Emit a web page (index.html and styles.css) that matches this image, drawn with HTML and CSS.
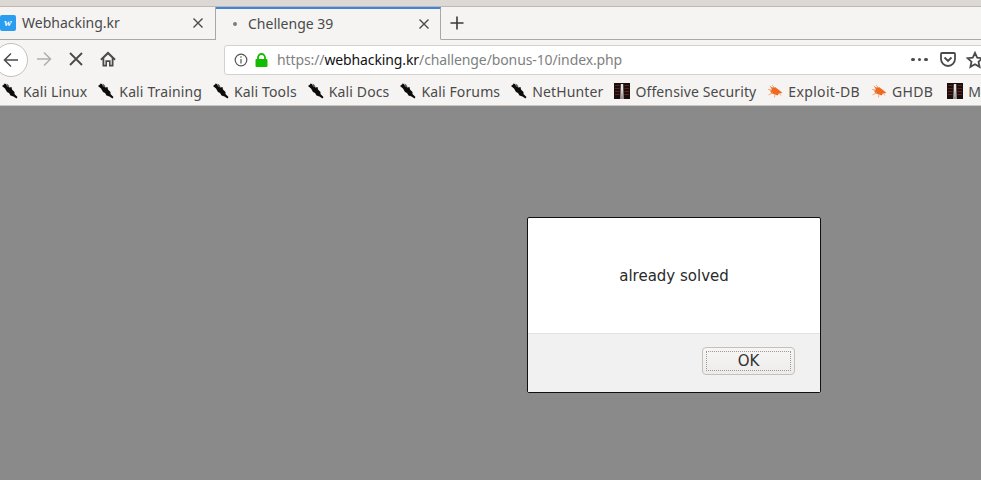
FILE: index.html
```html
<!DOCTYPE html>
<html lang="en">
<head>
<meta charset="utf-8">
<title>Challenge 39</title>
<link rel="stylesheet" href="styles.css">
</head>
<body>
<svg class="defs" width="0" height="0" aria-hidden="true">
  <defs>
    <symbol id="kali" viewBox="0 0 16 16">
      <path d="M0 3 L2 1.5 L2.5 0.5 L4 1 L5 3 L7.5 4.5 L9.5 4 L10 6.5 L12.5 9 L12.5 11 L15.5 14 L14.5 15.5 L11.5 13.5 L8.5 12.5 L7 10 L5 9 L3 5.5 Z" fill="#0c0c0c"/>
      <path d="M4.5 0.5 L6.5 2 L7.5 4 L6.5 4 L5 2.5 Z" fill="#555"/>
    </symbol>
    <symbol id="offsec" viewBox="0 0 16 16">
      <rect width="16" height="16" fill="#1d0e0e"/>
      <path d="M1 2.5H5.5M1 5.5H5.5M1 8.5H5.5M1 11.5H5.5M10.5 2.5H15M10.5 5.5H15M10.5 8.5H15M10.5 11.5H15" stroke="#5c2521" stroke-width="1"/>
      <path d="M6.8 1 H9.2 L9.6 16 H8.4 L8 5.5 L7.6 16 H6.4 Z" fill="#e8e4e0"/>
    </symbol>
    <symbol id="bug" viewBox="0 0 16 16">
      <path d="M2.5 2.5 L5 4.5 L8 4 L12 7 L15.5 10 L12 10.5 L10.5 12.5 L8 11.5 L4.5 10.5 L3 7.5 L5 6.5 Z" fill="#ee6a22"/>
      <path d="M5 2 L8 5 M1 6.5 L5 7 M1.5 12 L6 9.5 M8 11 L7.5 14.5 M12 10 L14 12.5" stroke="#f7a678" stroke-width="1" fill="none"/>
    </symbol>
  </defs>
</svg>

<div class="strip"></div>

<div class="tabbar">
  <div class="tab tab-first">
    <span class="favicon">w</span>
    <span class="tab-title">Webhacking.kr</span>
    <svg class="tab-close" viewBox="0 0 12 12"><path d="M1.5 1.5L10.5 10.5M10.5 1.5L1.5 10.5"/></svg>
  </div>
  <div class="tab tab-active">
    <span class="tab-dot"></span>
    <span class="tab-title">Chellenge 39</span>
    <svg class="tab-close" viewBox="0 0 12 12"><path d="M1.5 1.5L10.5 10.5M10.5 1.5L1.5 10.5"/></svg>
  </div>
  <svg class="newtab" viewBox="0 0 16 16"><path d="M8 1.5V14.5M1.5 8H14.5"/></svg>
</div>

<div class="navbar">
  <div class="back">
    <svg class="nav-icon" viewBox="0 0 18 18"><path d="M16 9H2.5M9 2.5L2.5 9L9 15.5"/></svg>
  </div>
  <svg class="nav-icon forward" viewBox="0 0 18 18"><path d="M2 9H15.5M9 2.5L15.5 9L9 15.5"/></svg>
  <svg class="nav-icon stop" viewBox="0 0 16 16"><path d="M2 2L14 14M14 2L2 14"/></svg>
  <svg class="home" viewBox="0 0 16 16"><path d="M8 0.5L0.3 8L1.6 9.4L2.5 8.6V15.5H7V11H9V15.5H13.5V8.6L14.4 9.4L15.7 8Z M8 3.4L11.7 7V13.7H10.6V9.3H5.4V13.7H4.3V7Z" fill-rule="evenodd"/></svg>
  <div class="urlbar">
    <svg class="info" viewBox="0 0 14 14"><circle cx="7" cy="7" r="5.8"/><path d="M7 6V10.5M7 3.2V4.8"/></svg>
    <svg class="lock" viewBox="0 0 13 14"><path d="M3 6.5V4.5a3.5 3.5 0 0 1 7 0V6.5" fill="none" stroke="#12bc00" stroke-width="1.8"/><rect x="0.5" y="6" width="12" height="8" rx="1" fill="#12bc00"/></svg>
    <span class="url"><span class="url-dim">https://</span>webhacking.kr<span class="url-dim">/challenge/bonus-10/index.php</span></span>
    <span class="dots"><i></i><i></i><i></i></span>
    <svg class="pocket" viewBox="0 0 16 15"><path d="M2 1H14A1 1 0 0 1 15 2V7A7 7 0 0 1 1 7V2A1 1 0 0 1 2 1Z M4.5 5.5L8 9L11.5 5.5"/></svg>
    <svg class="star" viewBox="0 0 18 18"><path d="M9 1.8L11.2 6.6L16.4 7.2L12.5 10.7L13.6 15.9L9 13.3L4.4 15.9L5.5 10.7L1.6 7.2L6.8 6.6Z"/></svg>
  </div>
</div>

<div class="bookmarks">
  <span class="bm"><svg class="bm-icon"><use href="#kali"/></svg>Kali Linux</span>
  <span class="bm"><svg class="bm-icon"><use href="#kali"/></svg>Kali Training</span>
  <span class="bm"><svg class="bm-icon"><use href="#kali"/></svg>Kali Tools</span>
  <span class="bm"><svg class="bm-icon"><use href="#kali"/></svg>Kali Docs</span>
  <span class="bm"><svg class="bm-icon"><use href="#kali"/></svg>Kali Forums</span>
  <span class="bm"><svg class="bm-icon"><use href="#kali"/></svg>NetHunter</span>
  <span class="bm"><svg class="bm-icon"><use href="#offsec"/></svg>Offensive Security</span>
  <span class="bm bm-wide"><svg class="bm-icon"><use href="#bug"/></svg>Exploit-DB</span>
  <span class="bm bm-wide"><svg class="bm-icon"><use href="#bug"/></svg>GHDB</span>
  <span class="bm bm-last"><svg class="bm-icon"><use href="#offsec"/></svg>M</span>
</div>

<main class="content">
  <div class="dialog">
    <div class="dialog-body">already solved</div>
    <div class="dialog-foot">
      <button class="ok" type="button"><span class="ok-inner">OK</span></button>
    </div>
  </div>
</main>
</body>
</html>
```
FILE: styles.css
```css
* { box-sizing: border-box; }
html, body { margin: 0; padding: 0; height: 100%; overflow: hidden; }
body {
  width: 981px;
  height: 480px;
  display: flex;
  flex-direction: column;
  font-family: "Noto Sans", "Open Sans", sans-serif;
  color: #3a3a3a;
  background: #8a8a8a;
  position: relative;
}
.defs { position: absolute; }

.strip {
  height: 7px;
  flex: none;
  background: #dcd8d3;
  border-bottom: 1px solid #bfb8b1;
}

.tabbar {
  height: 33px;
  flex: none;
  display: flex;
  align-items: stretch;
  background: #f5f4f2;
  border-bottom: 1px solid #aaa7a4;
}
.tab {
  display: flex;
  align-items: center;
  font-size: 14px;
  position: relative;
}
.tab-first {
  width: 216px;
  border-right: 1px solid #aaa7a4;
}
.favicon {
  width: 16px;
  height: 16px;
  flex: none;
  border-radius: 2px;
  background: #2a9df0;
  color: #fff;
  font: italic bold 11px/15px "Liberation Serif", serif;
  text-align: center;
}
.tab-first .tab-title { margin-left: 6px; width: 170px; }
.tab-title { color: #4a4a4a; white-space: nowrap; line-height: 20px; }
.tab-close {
  width: 12px;
  height: 12px;
  flex: none;
  fill: none;
  stroke: #4a4a4a;
  stroke-width: 1.4;
}
.tab-active {
  width: 225px;
  height: 33px;
  padding-left: 17px;
  background: #f5f4f2;
  border-top: 2px solid #3d85dc;
  border-right: 1px solid #aaa7a4;
  border-bottom: 1px solid #f5f4f2;
}
.tab-dot {
  width: 4px;
  height: 4px;
  flex: none;
  border-radius: 50%;
  background: #7d7d7d;
}
.tab-active .tab-title { margin-left: 11px; width: 170px; }
.newtab {
  width: 16px;
  height: 16px;
  margin: 8px 0 0 8px;
  fill: none;
  stroke: #3a3a3a;
  stroke-width: 1.6;
}

.navbar {
  height: 38px;
  flex: none;
  display: flex;
  align-items: center;
  background: #f5f4f2;
}
.back {
  width: 34px;
  height: 34px;
  flex: none;
  margin-left: -6px;
  margin-top: 1px;
  border-radius: 50%;
  background: #fff;
  border: 1px solid #c3c0bd;
  display: flex;
  align-items: center;
  justify-content: center;
}
.nav-icon {
  width: 18px;
  height: 18px;
  flex: none;
  fill: none;
  stroke: #4a4a4a;
  stroke-width: 1.5;
}
.forward { margin-left: 7px; stroke: #b0afad; }
.stop { width: 16px; height: 16px; margin-left: 15px; stroke-width: 1.8; }
.home { width: 16px; height: 16px; flex: none; margin-left: 16px; fill: #4a4a4a; }

.urlbar {
  width: 800px;
  height: 30px;
  flex: none;
  margin-left: 108px;
  margin-top: 1px;
  display: flex;
  align-items: center;
  background: #fff;
  border: 1px solid #d4d2cf;
  border-radius: 3px 0 0 3px;
  padding-left: 9px;
}
.info {
  width: 14px;
  height: 14px;
  flex: none;
  fill: none;
  stroke: #555;
  stroke-width: 1.2;
}
.lock { width: 13px; height: 14px; flex: none; margin-left: 7px; }
.url {
  margin-left: 9px;
  width: 634px;
  flex: none;
  font-size: 14px;
  letter-spacing: -0.11px;
  color: #111;
  white-space: nowrap;
}
.url-dim { color: #7f7f7f; }
.dots { display: flex; gap: 3px; flex: none; }
.dots i { width: 3.5px; height: 3.5px; border-radius: 50%; background: #4a4a4a; display: block; }
.pocket {
  width: 16px;
  height: 15px;
  flex: none;
  margin-left: 12px;
  fill: none;
  stroke: #4a4a4a;
  stroke-width: 1.8;
}
.star {
  width: 18px;
  height: 18px;
  flex: none;
  margin-left: 10px;
  fill: none;
  stroke: #4a4a4a;
  stroke-width: 1.8;
}

.bookmarks {
  height: 28px;
  flex: none;
  display: flex;
  align-items: center;
  gap: 11px;
  padding-left: 2px;
  padding-bottom: 1px;
  background: #f5f4f2;
  border-bottom: 1px solid #c9c6c3;
  overflow: hidden;
  white-space: nowrap;
  font-size: 14px;
  letter-spacing: 0.13px;
  color: #4a4a4a;
}
.bm { display: flex; align-items: center; flex: none; }
.bm-wide { letter-spacing: 0.33px; }
.bm-last { margin-left: 3px; }
.bm-icon { width: 16px; height: 16px; flex: none; margin-right: 5px; }

.content {
  flex: 1;
  background: #8a8a8a;
  position: relative;
}
.dialog {
  position: absolute;
  left: 527px;
  top: 111px;
  width: 294px;
  height: 176px;
  display: flex;
  flex-direction: column;
  background: #fff;
  border: 1px solid #111;
  border-radius: 2px;
  font-family: "DejaVu Sans", sans-serif;
  color: #2a2a2a;
}
.dialog-body {
  height: 115px;
  flex: none;
  padding-top: 50px;
  text-align: center;
  font-size: 15px;
  line-height: 17px;
}
.dialog-foot {
  flex: 1;
  display: flex;
  align-items: flex-start;
  justify-content: flex-end;
  padding: 13px 25px 0 0;
  background: #f1f1f1;
  border-top: 1px solid #e2e2e2;
}
.ok {
  width: 93px;
  height: 28px;
  padding: 3px;
  background: linear-gradient(#f7f6f5, #eeecea);
  border: 1px solid #c5c0ba;
  border-radius: 4px;
  font: 15px "DejaVu Sans", sans-serif;
  color: #333;
}
.ok-inner {
  display: block;
  height: 100%;
  line-height: 19px;
  border: 1px dotted #9a9a9a;
}
```
